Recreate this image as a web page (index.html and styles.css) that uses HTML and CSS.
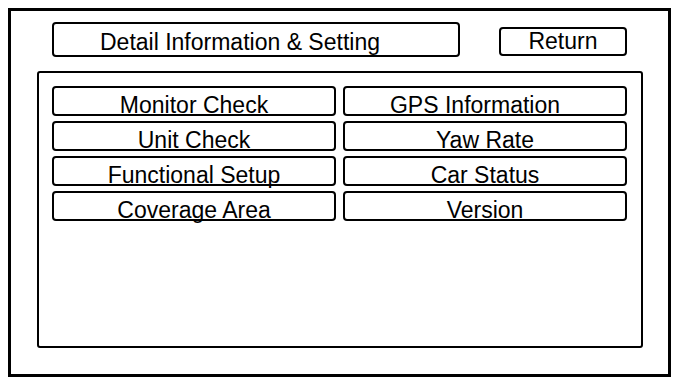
FILE: index.html
```html
<!DOCTYPE html>
<html lang="en">
<head>
  <meta charset="UTF-8">
  <meta name="viewport" content="width=device-width, initial-scale=1.0">
  <title>Detail Information &amp; Setting</title>

  <link rel="stylesheet" href="styles.css">

</head>
<body>
  <div class="screen">
    <div class="top-bar">
      <div class="title-box">Detail Information &amp; Setting</div>
      <div class="return-btn">Return</div>
    </div>

    <div class="panel">
      <div class="menu">
        <div class="menu-btn">Monitor Check</div>
        <div class="menu-btn gps">GPS Information</div>
        <div class="menu-btn">Unit Check</div>
        <div class="menu-btn">Yaw Rate</div>
        <div class="menu-btn">Functional Setup</div>
        <div class="menu-btn">Car Status</div>
        <div class="menu-btn">Coverage Area</div>
        <div class="menu-btn">Version</div>
      </div>
    </div>
  </div>
</body>
</html>
```

FILE: styles.css
```css
body{
  margin: 0;
  background-color: #ffffff;
  color: #000000;
  font-family: "Liberation Sans", Arial, sans-serif;
  font-size: 23px;
}

.screen{
  box-sizing: border-box;
  margin: 8px 0 0 8px;
  width: 663px;
  height: 369px;
  border: 3px solid #000000;
}

.top-bar{
  display: flex;
  align-items: flex-start;
  gap: 39px;
  padding: 11px 0 0 41px;
}

.title-box{
  box-sizing: border-box;
  width: 408px;
  height: 35px;
  border: 2px solid #000000;
  border-radius: 4px;
  padding: 5px 0 0 46px;
  line-height: 26px;
}

.return-btn{
  box-sizing: border-box;
  margin-top: 5px;
  width: 128px;
  height: 29px;
  border: 2px solid #000000;
  border-radius: 4px;
  text-align: center;
  line-height: 25px;
}

.panel{
  box-sizing: border-box;
  margin: 14px 0 0 26px;
  width: 606px;
  height: 277px;
  border: 2px solid #000000;
  border-radius: 3px;
  padding: 13px 0 0 13px;
}

.menu{
  display: grid;
  grid-template-columns: 284px 284px;
  grid-auto-rows: 30px;
  column-gap: 7px;
  row-gap: 5px;
}

.menu-btn{
  box-sizing: border-box;
  border: 2px solid #000000;
  border-radius: 4px;
  padding-top: 8px;
  line-height: 18px;
  text-align: center;
  white-space: nowrap;
}

/* 원본에서 이 항목만 글자가 왼쪽으로 치우쳐 있음 */
.menu-btn.gps{
  padding-right: 20px;
}
```
